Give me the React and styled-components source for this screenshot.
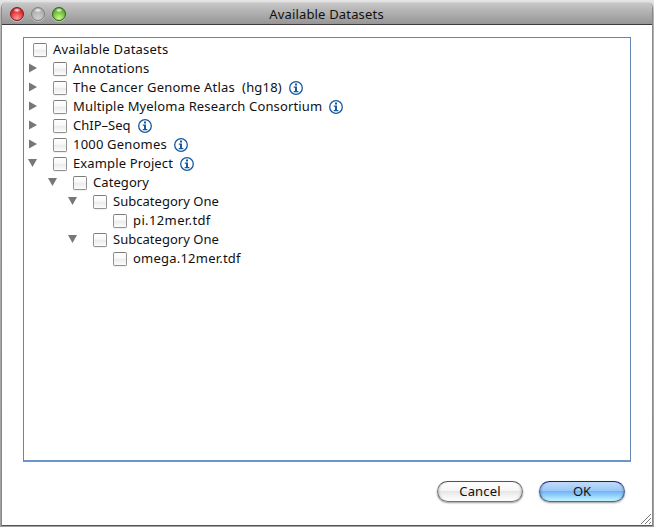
import React from "react";
import styled, { createGlobalStyle } from "styled-components";

const GlobalStyle = createGlobalStyle`
  * { box-sizing: border-box; }
  body { margin: 0; background: #e4e4e4; font-family: "Noto Sans", "Open Sans", sans-serif; }
`;

const Desktop = styled.div`
  position: relative;
  width: 654px;
  height: 527px;
  padding: 2px 1px 1px;
  overflow: hidden;
  background: linear-gradient(#e6e6e6 0, #dedede 3px, #b5b5b5 14px, #a0a0a0 100%);
`;

const Window = styled.div`
  height: 524px;
  display: flex;
  flex-direction: column;
  background: #fff;
  border: 1px solid #888;
  border-top: 0;
  border-bottom-color: #555;
  border-radius: 6px 6px 0 0;
  overflow: hidden;
`;

const TitleBar = styled.header`
  height: 23px;
  flex: none;
  display: grid;
  grid-template-columns: 70px 1fr 70px;
  align-items: center;
  background: linear-gradient(#d4d4d4 0, #c4c4c4 2px, #969696 100%);
  border-bottom: 1px solid #3e3b3e;
`;

const Lights = styled.div`
  display: flex;
  gap: 7px;
  padding: 1px 0 0 8px;
`;

const Light = styled.i`
  width: 14px;
  height: 14px;
  border-radius: 50%;
  border: 1px solid ${(p) => p.$edge};
  background:
    radial-gradient(ellipse 4px 2.5px at 50% 18%, #fffe 0, #fff0 100%),
    radial-gradient(circle at 50% 85%, ${(p) => p.$glow} 0, ${(p) => p.$tone} 65%, ${(p) => p.$edge} 110%);
  box-shadow: 0 1px 0 #ffffff60;
`;

const Title = styled.h1`
  margin: 0;
  font-size: 13px;
  line-height: 18px;
  font-weight: 400;
  text-align: center;
  color: #111;
  letter-spacing: 0.17px;
  padding: 1px 1px 0 0;
`;

const Content = styled.main`
  flex: 1;
  padding: 12px 21px 0;
`;

const Tree = styled.ul`
  margin: 0;
  height: 425px;
  padding: 2px 0 0;
  list-style: none;
  border: 1px solid #6586b3;
  border-bottom: 2px solid #6b96cb;
`;

const Row = styled.li`
  height: 19px;
  display: flex;
  align-items: center;
  padding-left: ${(p) => p.$depth * 20}px;
`;

const RootRow = styled(Row)`
  padding-left: 9px;
`;

const Toggle = styled.svg`
  width: 10px;
  height: 10px;
  margin: -2px 15px 0 4px;
  flex: none;
  fill: #777;
`;

const Gap = styled.span`
  width: 29px;
  flex: none;
`;

const Check = styled.span`
  width: 14px;
  height: 14px;
  margin-top: 1px;
  flex: none;
  border: 1px solid #929292;
  border-top-color: #7c7c7c;
  border-radius: 2px;
  background: linear-gradient(#fff 0, #f8f8f8 45%, #ebebeb 50%, #fcfcfc 100%);
  box-shadow: 0 1px 1px #0001;
`;

const Label = styled.span`
  margin-left: 6px;
  font-size: 13px;
  line-height: 19px;
  white-space: pre;
  color: #111;
  letter-spacing: ${(p) => p.$track}px;
`;

const Info = styled.svg`
  width: 14px;
  height: 14px;
  flex: none;
  margin: 1px 0 0 7px;
`;

const Actions = styled.footer`
  display: flex;
  justify-content: flex-end;
  gap: 16px;
  padding: 19px 6px 0 0;
`;

const Button = styled.button`
  width: 86px;
  height: 21px;
  padding: 0 0 1px;
  font: 13px/18px "Noto Sans", "Open Sans", sans-serif;
  letter-spacing: ${(p) => p.$track}px;
  color: #111;
  border-radius: 11px;
  border: 1px solid;
  border-color: ${(p) => (p.$primary ? "#1d1d96 #3d5b9b #4f6b85" : "#555 #747474 #777")};
  background: ${(p) =>
    p.$primary
      ? "linear-gradient(#c2dcf8 0, #9ac8f8 45%, #72b4f6 50%, #94d0fc 72%, #c2f8ff 100%)"
      : "linear-gradient(#fff 0, #f6f6f6 45%, #e6e6e6 50%, #f4f4f4 75%, #fff 100%)"};
  box-shadow: 0 1px 2px #0006, inset 2px 0 2px -1px #0003, inset -2px 0 2px -1px #0003;
`;

const Grip = styled.svg`
  position: absolute;
  right: 2px;
  bottom: 2px;
  width: 12px;
  height: 12px;
  stroke: #777;
  stroke-width: 1;
`;

const rows = [
  { text: "Annotations", depth: 0, track: 0.18 },
  { text: "The Cancer Genome Atlas  (hg18)", depth: 0, track: 0.2, info: true },
  { text: "Multiple Myeloma Research Consortium", depth: 0, track: 0.15, info: true },
  { text: "ChIP–Seq", depth: 0, track: 0, info: true },
  { text: "1000 Genomes", depth: 0, track: 0.2, info: true },
  { text: "Example Project", depth: 0, track: 0.13, open: true, info: true },
  { text: "Category", depth: 1, track: 0.08, open: true },
  { text: "Subcategory One", depth: 2, track: 0.03, open: true },
  { text: "pi.12mer.tdf", depth: 3, track: 0.38, leaf: true },
  { text: "Subcategory One", depth: 2, track: 0.03, open: true },
  { text: "omega.12mer.tdf", depth: 3, track: 0.22, leaf: true },
];

const InfoIcon = () => (
  <Info viewBox="0 0 14 14">
    <circle cx="7" cy="7" r="6.3" fill="#fff" stroke="#15599f" strokeWidth="1.3" />
    <path d="M6 2.5h2v2H6zM4.8 5.5H8v4.4h1.4v1.3H4.7V9.9H6V6.8H4.8z" fill="#15599f" />
  </Info>
);

export default function App() {
  return (
    <Desktop>
      <GlobalStyle />
      <Window>
        <TitleBar>
          <Lights>
            <Light $edge="#7d1a1c" $tone="#e0252b" $glow="#ff9a96" />
            <Light $edge="#808080" $tone="#b0b0b0" $glow="#d0d0d0" />
            <Light $edge="#2f6416" $tone="#62b52f" $glow="#c8f88a" />
          </Lights>
          <Title>Available Datasets</Title>
        </TitleBar>
        <Content>
          <Tree>
            <RootRow>
              <Check />
              <Label $track={0.22}>Available Datasets</Label>
            </RootRow>
            {rows.map((r, i) => (
              <Row key={i} $depth={r.depth}>
                {r.leaf ? (
                  <Gap />
                ) : (
                  <Toggle viewBox="0 0 10 10">
                    <path d={r.open ? "M0 1h9L4.5 9z" : "M1 .5v9L9 5z"} />
                  </Toggle>
                )}
                <Check />
                <Label $track={r.track}>{r.text}</Label>
                {r.info && <InfoIcon />}
              </Row>
            ))}
          </Tree>
          <Actions>
            <Button $track={0.15}>Cancel</Button>
            <Button $primary $track={0}>OK</Button>
          </Actions>
        </Content>
      </Window>
      <Grip viewBox="0 0 12 12">
        <path d="M1 11L11 1M5 11l6-6M9 11l2-2" />
      </Grip>
    </Desktop>
  );
}
